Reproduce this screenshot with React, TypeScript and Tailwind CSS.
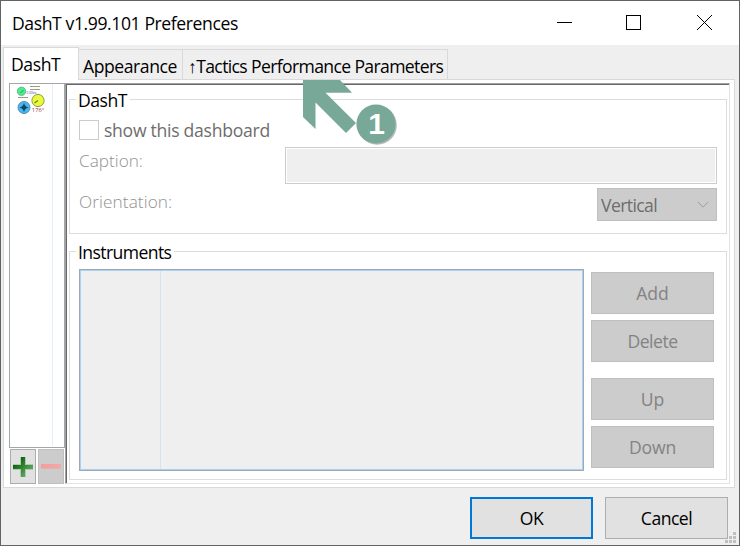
import React from 'react';

const FONT = "font-['Open_Sans','Noto_Sans',sans-serif]";

function SideButton({ label, className }: { label: string; className: string }) {
  return (
    <button className="flex h-[42px] w-[123px] items-center justify-center border border-[#bfbfbf] bg-[#cccccc] pt-px text-[#838383]">
      <span className={className}>{label}</span>
    </button>
  );
}

function GroupBox({ title, titleClass, className, children }: { title: string; titleClass: string; className: string; children: React.ReactNode }) {
  return (
    <section className={`ml-[2px] w-[658px] border border-[#dcdcdc] ${className}`}>
      <h2 className={`-mt-[11px] ml-[6px] h-[22px] bg-white leading-[22px] ${titleClass}`}>{title}</h2>
      {children}
    </section>
  );
}

function TitleBar() {
  return (
    <header className="flex h-[44px] shrink-0 items-center bg-white pl-[11px]">
      <h1 className="grow pt-px text-[17.6px] tracking-[-0.41px]">DashT v1.99.101 Preferences</h1>
      <svg width="192" height="44" viewBox="0 0 192 44" fill="none" stroke="#000" shapeRendering="crispEdges">
        <path d="M10 21.5h15" />
        <rect x="79.5" y="14.5" width="14" height="14" />
        <path d="M150 14l15 15M165 14l-15 15" shapeRendering="auto" />
      </svg>
    </header>
  );
}

function DashboardIcon() {
  return (
    <svg className="ml-[6px] mt-[2px] block" width="32" height="29" viewBox="0 0 32 29">
      <circle cx="5.5" cy="5.3" r="4.2" fill="#46f08c" stroke="#62a982" strokeWidth=".8" />
      <path d="M4.500 7l3-3" stroke="#208050" strokeWidth=".8" />
      <path d="M14 .5h10M14 3.500h10M2 11.500h10" stroke="#9a9d83" strokeWidth="1.100" />
      <text x="10.500" y="8" fontSize="4" textLength="10" lengthAdjust="spacingAndGlyphs" fill="#4d4c99" className={FONT}>0.00kts</text>
      <circle cx="22" cy="14.500" r="6.100" fill="#e9fa3e" stroke="#90983f" />
      <path d="M18.500 17l3.500-2.500" stroke="#777a20" strokeWidth="1.100" />
      <circle cx="8" cy="21.500" r="6" fill="#42b8f4" stroke="#5c8ca5" />
      <path d="M8 17l1.300 3.200L12.500 21.500l-3.200 1.300L8 26l-1.300-3.200L3.500 21.500l3.200-1.300z" fill="#124967" />
      <circle cx="8" cy="21.500" r="2.200" fill="#164662" />
      <text x="15.800" y="26" fontSize="5.500" textLength="12.500" lengthAdjust="spacingAndGlyphs" fill="#96363b" className={FONT}>176°</text>
    </svg>
  );
}

function DashboardList() {
  return (
    <aside className="flex w-[56px] shrink-0 flex-col">
      <div className="flex h-[365px] border border-[#a5a6ab] bg-white">
        <div className="h-[362px] w-[43px] border-r border-[#e5eefc]">
          <DashboardIcon />
        </div>
      </div>
      <div className="mt-px flex gap-[2px] pl-px">
        <button className="flex h-[35px] w-[26px] items-center justify-center border border-[#adadad] bg-[#e1e1e1]">
          <svg width="20" height="20" viewBox="0 0 20 20" shapeRendering="crispEdges">
            <defs>
              <linearGradient id="plus" x1="0" y1="0" x2="1" y2="1">
                <stop offset="0.2" stopColor="#056605" />
                <stop offset="1" stopColor="#80c080" />
              </linearGradient>
            </defs>
            <path d="M7 0h6v7h7v6h-7v7H7v-7H0V7h7z" fill="#b5c5b5" />
            <path d="M8 0h4v8h8v4h-8v8H8v-8H0V8h8z" fill="url(#plus)" />
          </svg>
        </button>
        <button className="flex h-[35px] w-[26px] items-center justify-center border border-[#bfbfbf] bg-[#cccccc]">
          <span className="h-[5px] w-[20px] border-b border-[#dcb3b3] bg-linear-to-r from-[#f99a9a] to-[#eeaaaa]" />
        </button>
      </div>
    </aside>
  );
}

function DashboardSettings() {
  return (
    <GroupBox title="DashT" titleClass="w-[54px] pl-[2px] text-[17.6px] tracking-[-0.5px]" className="mt-[14px] h-[135px]">
      <div className="mt-[9px] flex h-[20px] items-center pl-[9px]">
        <span className="h-[20px] w-[20px] border border-[#cccccc] bg-white" />
        <span className="ml-[5px] text-[17.6px] tracking-[-0.28px] text-[#6d6d6d]">show this dashboard</span>
      </div>
      <div className="mt-[7px] flex h-[37px] pl-[9px]">
        <span className="w-[206px] pt-[3px] text-[17.2px] font-light leading-[22px] text-[#929292]">Caption:</span>
        <div className="h-[37px] w-[432px] border border-[#cccccc] bg-white p-px">
          <div className="h-full bg-[#efefef]" />
        </div>
      </div>
      <div className="mt-[4px] flex h-[33px] pl-[9px]">
        <span className="w-[518px] pt-[3px] text-[17.2px] font-light leading-[22px] tracking-[0.1px] text-[#929292]">Orientation:</span>
        <div className="flex h-[33px] w-[120px] items-center justify-between border border-[#bfbfbf] bg-[#cccccc] pl-[3px] pr-[7px] text-[#6d6d6d]">
          <span className="pt-px text-[17.6px] tracking-[-0.6px]">Vertical</span>
          <svg width="12" height="8" viewBox="0 0 12 8" fill="none" stroke="#9d9d9d">
            <path d="M.8 1L6 6.2L11.2 1" />
          </svg>
        </div>
      </div>
    </GroupBox>
  );
}

function InstrumentSettings() {
  return (
    <GroupBox title="Instruments" titleClass="w-[98px] pl-[2px] text-[17.6px] tracking-[-0.6px]" className="mt-[17px] h-[229px]">
      <div className="mt-[6px] flex gap-[7px] pl-[9px]">
        <div className="h-[202px] w-[505px] border border-[#a0a9b3] bg-[#efefef]">
          <div className="h-full border border-[#a9d1f5]">
            <div className="h-full w-[80px] border-r border-[#d7e3f3]" />
          </div>
        </div>
        <div className="flex flex-col gap-[6px] pt-[3px]">
          <SideButton label="Add" className="text-[17.6px]" />
          <SideButton label="Delete" className="text-[17.6px] tracking-[-0.5px]" />
          <div className="mt-[10px] flex flex-col gap-[6px]">
            <SideButton label="Up" className="text-[17.6px]" />
            <SideButton label="Down" className="text-[17.6px] tracking-[-0.2px]" />
          </div>
        </div>
      </div>
    </GroupBox>
  );
}

function Callout() {
  return (
    <svg className="pointer-events-none absolute left-[299px] top-[77px]" width="100" height="72" viewBox="300 78 100 72">
      <path d="M303 80h37l12 12.700h-26.500L356 123l-10 10-30.500-30.500v26.500L303 117z" fill="#78a898" />
      <circle cx="377.200" cy="125.200" r="19.600" fill="#b9b9b9" />
      <circle cx="376" cy="124" r="19.600" fill="#78a898" />
      <text x="376.500" y="134.300" textAnchor="middle" fontSize="30" fontWeight="700" fill="#fff" className="font-['Liberation_Sans',sans-serif]">1</text>
    </svg>
  );
}

export default function App() {
  return (
    <div className={`relative flex h-[546px] w-[740px] flex-col overflow-hidden border border-[#5f6566] bg-[#efefef] text-black ${FONT}`}>
      <TitleBar />
      <nav className="flex h-[34px] shrink-0 items-end pl-[2px] text-[17.6px]">
        <div className="relative -mb-px h-[33px] w-[76px] border border-b-0 border-[#d9d9d9] bg-white pl-[7px] pt-[4px] leading-[24px] tracking-[-0.4px]">DashT</div>
        <div className="h-[30px] w-[104px] border-t border-r border-[#d9d9d9] pl-[4px] pt-[4px] leading-[24px] tracking-[-0.45px]">Appearance</div>
        <div className="h-[30px] w-[265px] whitespace-nowrap border-t border-r border-[#d9d9d9] pl-[5px] pt-[4px] leading-[24px] tracking-[-0.64px]">↑Tactics Performance Parameters</div>
      </nav>
      <main className="ml-[2px] flex h-[409px] w-[732px] shrink-0 border border-[#d9d9d9] bg-white pl-[5px] pt-[3px]">
        <DashboardList />
        <div className="h-[401px] w-[665px] border border-b-[#e3e3e3] border-l-[#a0a0a0] border-r-[#e3e3e3] border-t-[#a0a0a0]">
          <div className="h-full border-l border-t border-[#696969]">
            <div className="flow-root">
              <DashboardSettings />
              <InstrumentSettings />
            </div>
          </div>
        </div>
      </main>
      <footer className="flex gap-[12px] pl-[469px] pt-[9px] text-[17.6px]">
        <button className="h-[42px] w-[123px] border-2 border-[#0078d7] bg-[#e1e1e1] tracking-[-0.5px]">OK</button>
        <button className="h-[42px] w-[123px] border border-[#adadad] bg-[#e1e1e1] tracking-[-0.5px]">Cancel</button>
      </footer>
      <svg className="absolute bottom-[2px] right-[3px]" width="11" height="11" viewBox="0 0 11 11" fill="#bfbfbf" shapeRendering="crispEdges">
        <path d="M8 0h3v3H8zM8 4h3v3H8zM8 8h3v3H8zM4 4h3v3H4zM4 8h3v3H4zM0 8h3v3H0z" />
      </svg>
      <Callout />
    </div>
  );
}
